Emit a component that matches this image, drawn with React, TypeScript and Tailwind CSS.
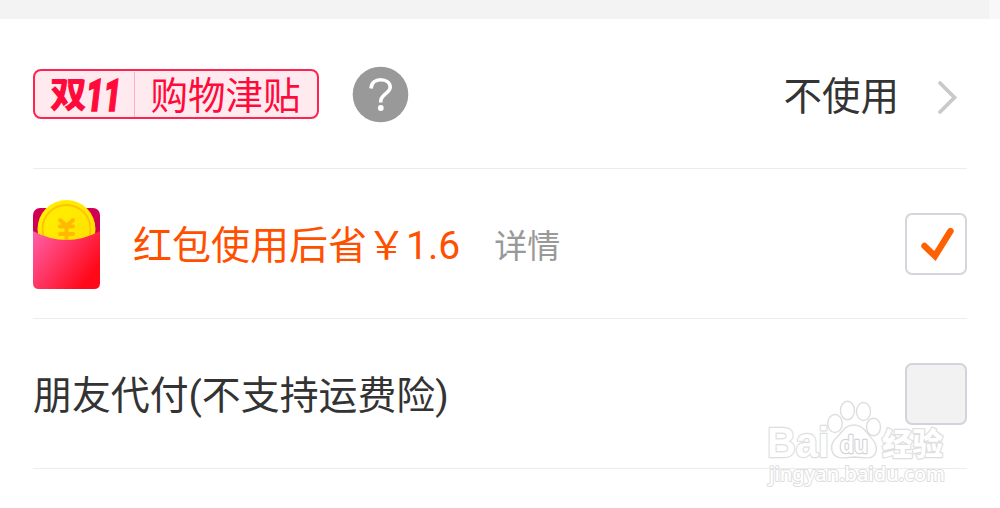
import type { ReactNode } from "react";

function Row({ children }: { children: ReactNode }) {
    return (
        <div className="flex h-[150px] items-center border-b border-[#ececec] pt-px text-[38.9px] leading-none text-[#333333]">
            {children}
        </div>
    );
}

function SubsidyBadge() {
    return (
        <div className="flex h-[50px] w-[286px] shrink-0 items-center rounded-[8px] border-2 border-[#ff2350] bg-[#ffebef] text-[#ff0a3b]">
            <svg className="h-[46px] w-[99px] shrink-0 overflow-visible" viewBox="0 0 99 46" fill="currentColor">
                <text x="15" y="36.500" fontSize="36" fontWeight="900" textLength="37" lengthAdjust="spacingAndGlyphs">
                    双
                </text>
                <text
                    className="italic"
                    x="51"
                    y="39.500"
                    fontSize="44"
                    fontWeight="900"
                    stroke="currentColor"
                    strokeWidth="1.500"
                    textLength="35"
                    lengthAdjust="spacingAndGlyphs"
                >
                    11
                </text>
            </svg>
            <div className="h-[45px] w-px bg-[#ffb3c2]" />
            <span className="pt-[5px] pl-[15.5px] text-[37.5px] whitespace-nowrap">购物津贴</span>
        </div>
    );
}

function RedPacket() {
    return (
        <svg className="h-[92px] w-[67px] shrink-0" viewBox="0 0 67 92">
            <defs>
                <linearGradient id="packet" x1="0" y1="0.15" x2="1" y2="0.8">
                    <stop offset="0" stopColor="#ff5aa0" />
                    <stop offset="0.9" stopColor="#ff0818" />
                </linearGradient>
                <linearGradient id="coin" x1="0" y1="0" x2="1" y2="1">
                    <stop offset="0" stopColor="#fff200" />
                    <stop offset="1" stopColor="#ffdd00" />
                </linearGradient>
            </defs>
            <rect y="10" width="67" height="40" rx="7" fill="#cf0054" />
            <circle cx="33.500" cy="31" r="29" fill="url(#coin)" />
            <circle cx="33.500" cy="31" r="24" fill="none" stroke="#ffc400" strokeWidth="2" />
            <path
                d="M27 22L33.500 28L40 22M27 28.500H40M27 36H40M33.500 28V43"
                fill="none"
                stroke="#ffb900"
                strokeWidth="4"
                strokeLinecap="round"
            />
            <path d="M0 33Q33.500 51 67 33V85Q67 91 61 91H6Q0 91 0 85Z" fill="url(#packet)" />
        </svg>
    );
}

function Watermark() {
    return (
        <svg
            className="absolute top-[395px] left-[760px] h-[100px] w-[195px]"
            viewBox="0 0 195 100"
            fill="#ffffff"
            stroke="#dedede"
            strokeWidth="2.400"
            strokeLinejoin="round"
        >
            <text
                className="font-['Liberation_Sans',sans-serif]"
                x="7"
                y="61.500"
                fontSize="42"
                fontWeight="700"
                textLength="62"
                lengthAdjust="spacingAndGlyphs"
                paintOrder="stroke"
            >
                Bai
            </text>
            <g strokeWidth="1.400">
                <ellipse cx="75" cy="28.500" rx="7.200" ry="9" />
                <ellipse cx="87.500" cy="15.500" rx="7" ry="9.200" />
                <ellipse cx="103.500" cy="16.500" rx="7" ry="9" />
                <ellipse cx="113.500" cy="32" rx="7" ry="8.800" />
                <path d="M94 30C86 30 83 35 79 40C74 45 70 49 72 56C75 65 84 63 94 62C103 62 113 66 116 57C118 49 112 44 108 39C104 34 101 30 94 30Z" />
            </g>
            <text
                className="font-['Liberation_Sans',sans-serif]"
                x="80"
                y="57.500"
                fontSize="24"
                fontWeight="700"
                textLength="28"
                lengthAdjust="spacingAndGlyphs"
                paintOrder="stroke"
                stroke="#d4d4d4"
            >
                du
            </text>
            <text x="122" y="60" fontSize="31" fontWeight="900" textLength="61" lengthAdjust="spacingAndGlyphs" paintOrder="stroke">
                经验
            </text>
            <text
                className="font-['Noto_Sans',sans-serif]"
                x="9"
                y="85.500"
                fontSize="20"
                fontWeight="500"
                strokeWidth="2"
                textLength="176"
                lengthAdjust="spacingAndGlyphs"
                paintOrder="stroke"
            >
                jingyan.baidu.com
            </text>
        </svg>
    );
}

export default function App() {
    return (
        <div className="relative h-[508px] w-[1000px] overflow-hidden bg-white font-['Roboto','Noto_Sans_CJK_SC',sans-serif]">
            <div className="flex h-[19px] bg-[#f3f3f3]">
                <div className="ml-auto w-[11px] bg-[#f8f8f8]" />
            </div>
            <div className="px-[33px]">
                <Row>
                    <SubsidyBadge />
                    <svg className="ml-[33px] size-[57px] shrink-0" viewBox="0 0 57 57" fill="none">
                        <circle cx="28.500" cy="28.500" r="27.800" fill="#999999" />
                        <path
                            d="M19 22.500C19.500 16.500 23.500 13.800 28.500 13.800C34.500 13.800 38.200 17 38.200 21.300C38.200 27 28.800 28.500 28.800 35V36.500"
                            stroke="#ffffff"
                            strokeWidth="3.600"
                        />
                        <circle cx="28.800" cy="42" r="2.900" fill="#ffffff" />
                    </svg>
                    <span className="ml-auto pt-[6px] text-[38.5px]">不使用</span>
                    <svg className="mt-[6px] mr-[8px] ml-[38px] h-[36px] w-[22px]" viewBox="0 0 22 36" fill="none">
                        <path d="M3 4L17.500 18.500L3 33" stroke="#c9c9c9" strokeWidth="3.800" strokeLinecap="round" />
                    </svg>
                </Row>
                <Row>
                    <RedPacket />
                    <span className="ml-[33px] pt-[5px] text-[39px] text-[#ff5000]">红包使用后省￥1.6</span>
                    <span className="ml-[34px] pt-[4px] text-[33px] text-[#999999]">详情</span>
                    <div className="ml-auto flex size-[62px] items-center justify-center rounded-[7px] border-2 border-[#d5d5dc]">
                        <svg className="size-[58px]" viewBox="0 0 58 58" fill="none">
                            <path d="M17.500 31L28 41L43.500 16" stroke="#ff6000" strokeWidth="6.400" strokeLinecap="round" />
                        </svg>
                    </div>
                </Row>
                <Row>
                    <span className="pt-[5px]">朋友代付(不支持运费险)</span>
                    <div className="ml-auto size-[62px] rounded-[7px] border-2 border-[#d2d3dc] bg-[#f2f2f2]" />
                </Row>
            </div>
            <Watermark />
        </div>
    );
}
